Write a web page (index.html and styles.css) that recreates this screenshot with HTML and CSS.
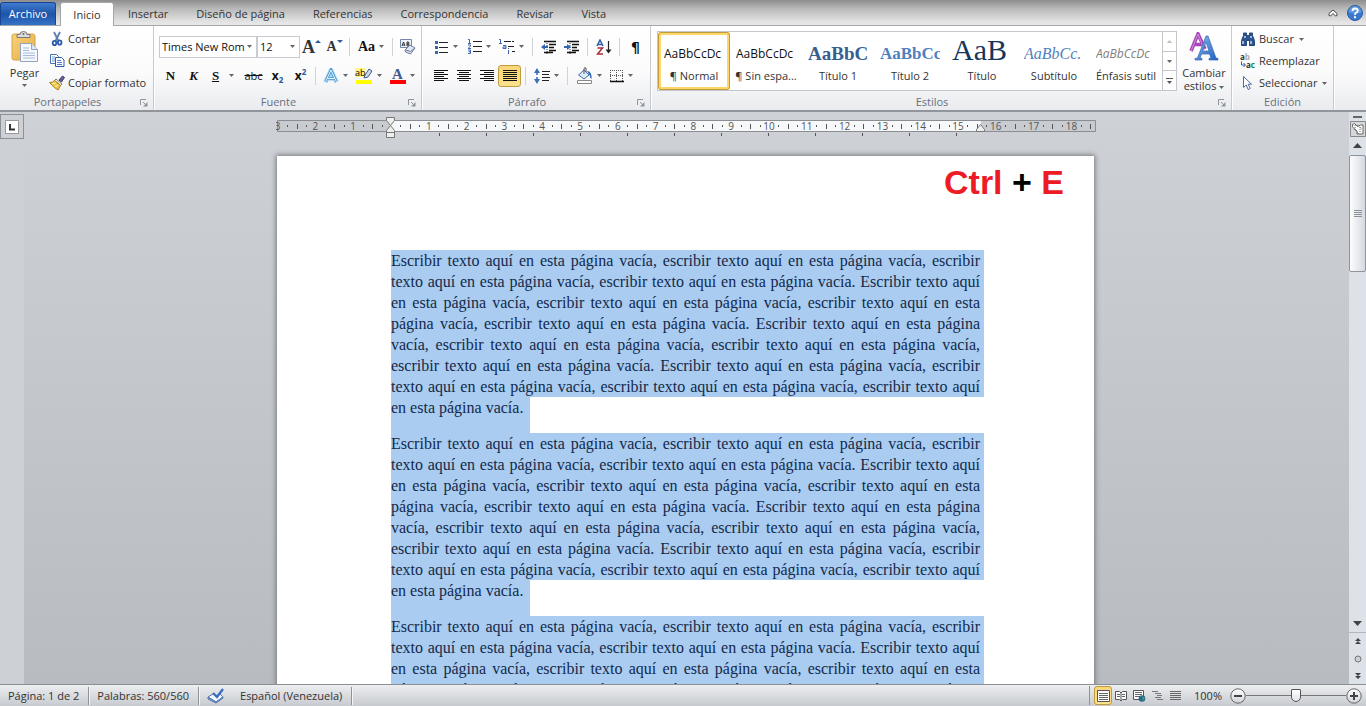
FILE: index.html
```html
<!DOCTYPE html>
<html lang="es">
<head>
<meta charset="utf-8">
<title>Documento - Procesador de textos</title>
<link rel="stylesheet" href="styles.css">
</head>
<body>
<svg class="defs" aria-hidden="true">
  <defs>
    <symbol id="arrow" viewBox="0 0 5 3"><path d="M0 0h5L2.500 3z" fill="#666"/></symbol>
    <symbol id="launch" viewBox="0 0 8 8"><path d="M.5 6V.5H6" fill="none" stroke="#8f959e"/><path d="M3 3l3 3" stroke="#8f959e"/><path d="M7.500 3v4.500H3z" fill="#8f959e"/></symbol>
    <linearGradient id="gold" x2="1" y2="1"><stop stop-color="#f8d27a"/><stop offset="1" stop-color="#e5ae45"/></linearGradient>
    <linearGradient id="blueA" x2="1" y2="1"><stop stop-color="#8dbcf0"/><stop offset="1" stop-color="#1f5fc0"/></linearGradient>
    <linearGradient id="steel" x2="0" y2="1"><stop stop-color="#fff"/><stop offset="1" stop-color="#cdd1d7"/></linearGradient>
  </defs>
</svg>

<nav class="tabs">
  <button class="tab file">Archivo</button>
  <button class="tab active">Inicio</button>
  <button class="tab">Insertar</button>
  <button class="tab">Diseño de página</button>
  <button class="tab">Referencias</button>
  <button class="tab">Correspondencia</button>
  <button class="tab">Revisar</button>
  <button class="tab">Vista</button>
  <span class="grow"></span>
  <button class="plain" aria-label="Minimizar la cinta"><svg width="10" height="8" viewBox="0 0 10 8"><path d="M1 4.500L5 1l4 3.500v2L7.500 7 5 4.500 2.500 7 1 6.500z" fill="#fff" stroke="#444"/></svg></button>
  <button class="plain help" aria-label="Ayuda"><svg width="16" height="16" viewBox="0 0 16 16"><circle cx="8" cy="8" r="7.500" fill="#3b78cf" stroke="#285ba5"/><path d="M1.500 7a6.500 6 0 0 1 13 0q-6 3-13 0z" fill="#5f97e0"/><path d="M5.500 6q0-2.500 2.600-2.500t2.600 2.200q0 1.300-1.500 2.100T8 10" fill="none" stroke="#fff" stroke-width="1.800"/><path d="M7 11.200h2v2H7z" fill="#fff"/></svg></button>
</nav>

<header class="ribbon">
  <section class="group clip">
    <div class="body">
      <button class="big paste">
        <svg width="28" height="32" viewBox="0 0 28 32"><rect x="1" y="3" width="23" height="26" rx="2" fill="url(#gold)" stroke="#d9a548"/><path d="M6 6.500V3.500h3q0-3 3.500-3t3.500 3h3v3z" fill="#ddd" stroke="#777"/><circle cx="12.500" cy="3" r="1" fill="#666"/><path d="M9.500 12.500h11l6 6v12h-17z" fill="#f5f9ff" stroke="#93a5bd"/><path d="M20.500 12.500v6h6" fill="#dce7f5" stroke="#93a5bd"/><path d="M12 17h6M12 19.500h6M12 22h12M12 24.500h12M12 27h12" stroke="#a7bbdc"/></svg>
        <span>Pegar</span><svg class="arr"><use href="#arrow"/></svg>
      </button>
      <div class="stack">
        <button class="cmd"><svg width="16" height="16" viewBox="0 0 16 16"><path d="M5 1l4.500 9M11 1L6.500 10" stroke="#5c7fae" stroke-width="1.800"/><ellipse cx="5.500" cy="12" rx="1.800" ry="2.200" fill="none" stroke="#2a5cab" stroke-width="1.800"/><ellipse cx="10.700" cy="11.500" rx="1.800" ry="2.200" fill="none" stroke="#2a5cab" stroke-width="1.800"/></svg>Cortar</button>
        <button class="cmd"><svg width="16" height="16" viewBox="0 0 16 16"><path d="M1.500 1.500h6l2 2v7h-8z" fill="#fff" stroke="#4870b0"/><path d="M3 4h3M3 6h5M3 8h5" stroke="#6e98d5"/><path d="M6.500 4.500h6l2.500 2.500v6.500H6.500z" fill="#fff" stroke="#2f5b9f"/><path d="M8 7.500h4M8 9.500h5M8 11.500h5" stroke="#4c83cf"/></svg>Copiar</button>
        <button class="cmd"><svg width="16" height="16" viewBox="0 0 16 16"><path d="M10 5l3.500-4 2 1.500L12.500 7z" fill="#625d98" stroke="#44406f"/><path d="M7 4l6 5-1.500 1.500-6-5z" fill="#eee" stroke="#887a52"/><path d="M5.500 5.500l6 5L9 15Q5 13 .5 7.500q3 .5 5-2z" fill="#efca4d" stroke="#aa7d1a"/><path d="M3 8.500q3 .5 4-1M6 11.500q2 0 3-2" stroke="#fff0a5" fill="none"/></svg>Copiar formato</button>
      </div>
    </div>
    <h2>Portapapeles<svg class="launch"><use href="#launch"/></svg></h2>
  </section>

  <section class="group font">
    <div class="body rows">
      <div class="row combos">
        <label class="combo family"><select aria-label="Fuente"><option>Times New Rom</option></select><svg class="arr"><use href="#arrow"/></svg></label>
        <label class="combo size"><select aria-label="Tamaño"><option>12</option></select><svg class="arr"><use href="#arrow"/></svg></label>
        <button class="tool serif grown">A<svg class="mark" width="6" height="3" viewBox="0 0 6 3"><path d="M0 3h6L3 0z" fill="#31599c"/></svg></button>
        <button class="tool serif shrunk">A<svg class="mark" width="6" height="3" viewBox="0 0 6 3"><path d="M0 0h6L3 3z" fill="#31599c"/></svg></button>
        <i class="sep"></i>
        <button class="tool split case serif">Aa<svg class="arr"><use href="#arrow"/></svg></button>
        <i class="sep"></i>
        <button class="tool" aria-label="Borrar formato"><svg width="17" height="17" viewBox="0 0 17 17"><path d="M1.500 1.500h11v8h-11z" fill="#eef4fd" stroke="#7387a8"/><path d="M3 8l1.500-4L6 8M3.500 7h2M8 4v4h1.500q1.500-1 0-2H8h1.500q1-1 0-2z" fill="none" stroke="#333"/><path d="M6 12l5-5 5 3-4.500 6-5-2z" fill="#dfe6f4" stroke="#6c7c9e"/><path d="M6.500 12l5 1.500L16 10" fill="none" stroke="#6c7c9e"/></svg></button>
      </div>
      <div class="row">
        <button class="tool serif bold">N</button>
        <button class="tool serif bold ital">K</button>
        <button class="tool split under serif bold"><u>S</u><svg class="arr"><use href="#arrow"/></svg></button>
        <button class="tool strike"><s>abc</s></button>
        <button class="tool heavy">x<sub>2</sub></button>
        <button class="tool heavy">x<sup>2</sup></button>
        <i class="sep"></i>
        <button class="tool split" aria-label="Efectos de texto"><svg width="16" height="16" viewBox="0 0 16 16"><path d="M2.500 14L8 2l5.500 12M4.500 10.500h7" fill="none" stroke="#a9d6f4" stroke-width="4.500" stroke-linejoin="round"/><path d="M2.500 14L8 2l5.500 12M4.500 10.500h7" fill="none" stroke="#4b96cb" stroke-width="2.600"/><path d="M2.500 14L8 2l5.500 12M4.500 10.500h7" fill="none" stroke="#e8f5ff"/></svg><svg class="arr"><use href="#arrow"/></svg></button>
        <button class="tool split hl" aria-label="Color de resaltado"><svg width="18" height="18" viewBox="0 0 18 18"><path d="M0 1h10v9H0z" fill="#fff685"/><text x="0" y="9" class="ab">ab</text><path d="M10 8l4-6 3 2-4 6-4 1z" fill="#cbd9ec" stroke="#435c85"/><path d="M1 13h16v4H1z" fill="#ff0"/></svg><svg class="arr"><use href="#arrow"/></svg></button>
        <button class="tool split" aria-label="Color de fuente"><svg width="17" height="18" viewBox="0 0 17 18"><text x="3" y="12" class="colorA">A</text><path d="M1 13h16v4H1z" fill="#f00"/></svg><svg class="arr"><use href="#arrow"/></svg></button>
      </div>
    </div>
    <h2>Fuente<svg class="launch"><use href="#launch"/></svg></h2>
  </section>

  <section class="group para">
    <div class="body rows">
      <div class="row">
        <button class="tool split" aria-label="Viñetas"><svg width="15" height="14" viewBox="0 0 15 14"><path d="M5 2.500h9M5 7.500h9M5 12.500h9" stroke="#222"/><path d="M1 1h3v3H1zM1 6h3v3H1zM1 11h3v3H1z" fill="#3c67ad"/></svg><svg class="arr"><use href="#arrow"/></svg></button>
        <button class="tool split" aria-label="Numeración"><svg width="15" height="15" viewBox="0 0 15 15"><path d="M6 2.500h9M6 7.500h9M6 12.500h9" stroke="#222"/><path d="M1 .5h1.500v4M1 4.500h3M1 6h2.500v1.200L1 9.500h3M1 11h2.500v3.500H1M1.500 12.700h2" fill="none" stroke="#3c67ad"/></svg><svg class="arr"><use href="#arrow"/></svg></button>
        <button class="tool split" aria-label="Lista multinivel"><svg width="16" height="15" viewBox="0 0 16 15"><path d="M5 2.500h10M9 7.500h6M13 12.500h3" stroke="#222" stroke-dasharray="7 1"/><path d="M0 .5h1.500v4M0 4.500h3M4 6.500h3v3H4V8h3M9.500 9v1M9.500 11v4" fill="none" stroke="#3c67ad"/></svg><svg class="arr"><use href="#arrow"/></svg></button>
        <i class="sep"></i>
        <button class="tool" aria-label="Disminuir sangría"><svg width="16" height="14" viewBox="0 0 16 14"><path d="M3 1.500h12M8 4.500h7M8 7.500h5M8 10.500h7M3 12.500h9" stroke="#111" stroke-width="1.600"/><path d="M6 1v13" stroke="#333" stroke-dasharray="1 1"/><path d="M7 7H3" stroke="#2f65b7" stroke-width="2"/><path d="M4 4v6L0 7z" fill="#2f65b7"/></svg></button>
        <button class="tool" aria-label="Aumentar sangría"><svg width="16" height="14" viewBox="0 0 16 14"><path d="M3 1.500h12M8 4.500h7M8 7.500h5M8 10.500h7M3 12.500h9" stroke="#111" stroke-width="1.600"/><path d="M6 1v13" stroke="#333" stroke-dasharray="1 1"/><path d="M0 7h4" stroke="#2f65b7" stroke-width="2"/><path d="M3 4v6l4-3z" fill="#2f65b7"/></svg></button>
        <i class="sep"></i>
        <button class="tool" aria-label="Ordenar"><svg width="16" height="16" viewBox="0 0 16 16"><path d="M1 7l3-6 3 6M2 5.500h4" fill="none" stroke="#315ca9" stroke-width="1.500"/><path d="M1.500 9H6.500l-5 6H7" fill="none" stroke="#a42d36" stroke-width="1.500"/><path d="M12.500 2v10" stroke="#222" stroke-width="1.200"/><path d="M9.500 10.500h6l-3 4z" fill="#222"/></svg></button>
        <i class="sep"></i>
        <button class="tool pilcrow" aria-label="Mostrar todo">¶</button>
      </div>
      <div class="row">
        <button class="tool" aria-label="Alinear a la izquierda"><svg width="14" height="12" viewBox="0 0 14 12"><path d="M0 .5h14M0 2.500h10M0 4.500h14M0 6.500h10M0 8.500h14M0 10.500h10" stroke="#111"/></svg></button>
        <button class="tool" aria-label="Centrar"><svg width="14" height="12" viewBox="0 0 14 12"><path d="M0 .5h14M2 2.500h10M0 4.500h14M2 6.500h10M0 8.500h14M2 10.500h10" stroke="#111"/></svg></button>
        <button class="tool" aria-label="Alinear a la derecha"><svg width="14" height="12" viewBox="0 0 14 12"><path d="M0 .5h14M4 2.500h10M0 4.500h14M4 6.500h10M0 8.500h14M4 10.500h10" stroke="#111"/></svg></button>
        <button class="tool on" aria-label="Justificar"><svg width="14" height="12" viewBox="0 0 14 12"><path d="M0 .5h14M0 2.500h14M0 4.500h14M0 6.500h14M0 8.500h14M0 10.500h14" stroke="#111"/></svg></button>
        <i class="sep"></i>
        <button class="tool split" aria-label="Interlineado"><svg width="16" height="16" viewBox="0 0 16 16"><path d="M3 3v10" stroke="#2f65b7" stroke-width="1.500" stroke-dasharray="4 2"/><path d="M0 5l3-5 3 5zM0 11l3 5 3-5z" fill="#3c70bd"/><path d="M8 3.500h8M8 6.500h7M8 9.500h8M8 12.500h7" stroke="#222"/></svg><svg class="arr"><use href="#arrow"/></svg></button>
        <i class="sep"></i>
        <button class="tool split" aria-label="Sombreado"><svg width="17" height="17" viewBox="0 0 17 17"><path d="M2.500 8L8 3l5 5-5 4z" fill="#dcebfb" stroke="#456a9e"/><path d="M8 7V2q0-2 2-1v4" fill="none" stroke="#555"/><path d="M11 4q5 0 4.500 8-2-1-1.500-3z" fill="#2d65b3"/><path d="M1.500 13.500h14v3h-14z" fill="#fff" stroke="#888"/></svg><svg class="arr"><use href="#arrow"/></svg></button>
        <button class="tool split" aria-label="Bordes"><svg width="14" height="14" viewBox="0 0 14 14"><path d="M.5 1v11M6.500 1v11M12.500 1v11M0 1.500h13M0 6.500h13" stroke="#555" stroke-dasharray="1 1"/><path d="M0 12.500h14" stroke="#111" stroke-width="1.500"/></svg><svg class="arr"><use href="#arrow"/></svg></button>
      </div>
    </div>
    <h2>Párrafo<svg class="launch"><use href="#launch"/></svg></h2>
  </section>

  <section class="group styles">
    <div class="body">
      <div class="gallery">
        <button class="style chosen"><b class="plainstyle">AaBbCcDc</b><span>¶ Normal</span></button>
        <button class="style"><b class="plainstyle">AaBbCcDc</b><span>¶ Sin espa...</span></button>
        <button class="style"><b class="h1style">AaBbC</b><span>Título 1</span></button>
        <button class="style"><b class="h2style">AaBbCc</b><span>Título 2</span></button>
        <button class="style"><b class="titlestyle">AaB</b><span>Título</span></button>
        <button class="style"><b class="substyle">AaBbCc.</b><span>Subtítulo</span></button>
        <button class="style"><b class="subtle">AaBbCcDc</b><span>Énfasis sutil</span></button>
        <div class="gscroll">
          <button aria-label="Arriba"><svg width="5" height="3" viewBox="0 0 5 3"><path d="M0 3h5L2.500 0z" fill="#bbb"/></svg></button>
          <button aria-label="Abajo"><svg class="arr"><use href="#arrow"/></svg></button>
          <button aria-label="Más"><svg width="7" height="6" viewBox="0 0 7 6"><path d="M0 .5h7" stroke="#555"/><path d="M1 3h5L3.500 6z" fill="#555"/></svg></button>
        </div>
      </div>
      <button class="big change">
        <svg width="30" height="30" viewBox="0 0 30 30"><path d="M2 19L9 2l7 15M5 12.500h8" fill="none" stroke="#a548b5" stroke-width="3.600"/><path d="M2 19L9 2l6 15" fill="none" stroke="#d58be0"/><path d="M6 28h7v-1.500l-2-.5 1.500-4h8l1.500 4-2 .5V28h9v-1.500l-2-.5L19 4h-2L8.500 26l-2.500.5zM13.500 19L17 10l3 9z" fill="url(#blueA)" stroke="#3169b5" stroke-width=".7"/></svg>
        <span>Cambiar<br>estilos <svg class="arr"><use href="#arrow"/></svg></span>
      </button>
    </div>
    <h2>Estilos<svg class="launch"><use href="#launch"/></svg></h2>
  </section>

  <section class="group edit">
    <div class="body">
      <div class="stack">
        <button class="cmd"><svg width="16" height="16" viewBox="0 0 16 16"><path d="M1.500 14.500v-5l2-5V2h3v2.500h3V2h3v2.500l2 5v5h-5v-5h-3v5z" fill="#2d548e" stroke="#254777"/><path d="M3 10v3M11 10v3M5 5v2M11 5v2" stroke="#b7d0ef" stroke-width="1.600"/></svg>Buscar<svg class="arr"><use href="#arrow"/></svg></button>
        <button class="cmd"><svg class="replace" width="16" height="16" viewBox="0 0 16 16"><text x="0" y="7" class="rep">a<tspan fill="#aaa">b</tspan></text><text x="6" y="15" class="rep">a<tspan fill="#168a2e">c</tspan></text><path d="M1.500 8.500V12H5M3.500 10l2 2-2 2" fill="none" stroke="#335f9d"/></svg>Reemplazar</button>
        <button class="cmd"><svg width="16" height="16" viewBox="0 0 16 16"><path d="M3.500 1.500v11l2.700-2.500 2 4.500 2-1-2-4.300h3.300z" fill="#fff" stroke="#526c99"/></svg>Seleccionar<svg class="arr"><use href="#arrow"/></svg></button>
      </div>
    </div>
    <h2>Edición</h2>
  </section>
</header>

<main class="workspace">
  <aside class="vruler"><button aria-label="Tabulación"><svg width="14" height="14" viewBox="0 0 14 14"><path d="M.5.5h13v13H.5z" fill="#fff" stroke="#999"/><path d="M5 4v5.500h5" fill="none" stroke="#333" stroke-width="2"/></svg></button></aside>
  <div class="canvas">
    <svg class="ruler" id="ruler" viewBox="0 0 820 24" width="820" height="24"></svg>
    <article class="page">
      <div class="shortcut">Ctrl <span>+</span> E</div>
      <div class="text" id="text">
        <p><span>Escribir texto aquí en esta página vacía, escribir texto aquí en esta página vacía, escribir</span> <span>texto aquí en esta página vacía, escribir texto aquí en esta página vacía. Escribir texto aquí</span> <span>en esta página vacía, escribir texto aquí en esta página vacía, escribir texto aquí en esta</span> <span>página vacía, escribir texto aquí en esta página vacía. Escribir texto aquí en esta página</span> <span>vacía, escribir texto aquí en esta página vacía, escribir texto aquí en esta página vacía,</span> <span>escribir texto aquí en esta página vacía. Escribir texto aquí en esta página vacía, escribir</span> <span>texto aquí en esta página vacía, escribir texto aquí en esta página vacía, escribir texto aquí</span> <span class="last">en esta página vacía.</span></p>
        <p><span>Escribir texto aquí en esta página vacía, escribir texto aquí en esta página vacía, escribir</span> <span>texto aquí en esta página vacía, escribir texto aquí en esta página vacía. Escribir texto aquí</span> <span>en esta página vacía, escribir texto aquí en esta página vacía, escribir texto aquí en esta</span> <span>página vacía, escribir texto aquí en esta página vacía. Escribir texto aquí en esta página</span> <span>vacía, escribir texto aquí en esta página vacía, escribir texto aquí en esta página vacía,</span> <span>escribir texto aquí en esta página vacía. Escribir texto aquí en esta página vacía, escribir</span> <span>texto aquí en esta página vacía, escribir texto aquí en esta página vacía, escribir texto aquí</span> <span class="last">en esta página vacía.</span></p>
        <p><span>Escribir texto aquí en esta página vacía, escribir texto aquí en esta página vacía, escribir</span> <span>texto aquí en esta página vacía, escribir texto aquí en esta página vacía. Escribir texto aquí</span> <span>en esta página vacía, escribir texto aquí en esta página vacía, escribir texto aquí en esta</span> <span>página vacía, escribir texto aquí en esta página vacía. Escribir texto aquí en esta página</span></p>
      </div>
    </article>
  </div>
  <aside class="vscroll">
    <i class="splitter"></i>
    <button class="toggle" aria-label="Regla"><svg width="16" height="16" viewBox="0 0 16 16"><path d="M.5.5h15v15H.5z" fill="#d5d8dc" stroke="#888"/><path d="M2.500 3.500l2-1 3 3 3-1.500h2.500v9h-6v-3l-4.500-4z" fill="#fff" stroke="#666"/><path d="M4 8l5 5M7 4l5 4M5 4v4M10 6v5" stroke="#666" stroke-dasharray="1 1"/></svg></button>
    <button aria-label="Subir"><svg width="9" height="5" viewBox="0 0 9 5"><path d="M0 5h9L4.500 0z" fill="#444"/></svg></button>
    <div class="track"><div class="thumb"><svg width="8" height="8" viewBox="0 0 8 8"><path d="M0 .5h8M0 2.500h8M0 4.500h8M0 6.500h8" stroke="#8a9099"/></svg></div></div>
    <button aria-label="Bajar"><svg width="9" height="5" viewBox="0 0 9 5"><path d="M0 0h9L4.500 5z" fill="#444"/></svg></button>
    <div class="browse">
      <button aria-label="Página anterior"><svg width="6" height="7" viewBox="0 0 6 7"><path d="M0 3h6L3 0zM0 6h6L3 3z" fill="#444"/></svg></button>
      <button aria-label="Seleccionar objeto"><svg width="8" height="8" viewBox="0 0 8 8"><circle cx="4" cy="4" r="3" fill="#ccd0d6" stroke="#777"/></svg></button>
      <button aria-label="Página siguiente"><svg width="6" height="7" viewBox="0 0 6 7"><path d="M0 1h6L3 4zM0 4h6L3 7z" fill="#444"/></svg></button>
    </div>
  </aside>
</main>

<footer class="status">
  <button class="cell">Página: 1 de 2</button>
  <button class="cell">Palabras: 560/560</button>
  <button class="cell lang"><svg width="18" height="16" viewBox="0 0 18 16"><path d="M1 9l5-3 3 2 4-2 3 3-7 5z" fill="#f4f8ff" stroke="#5777ad"/><path d="M1 9v2l8 4 7-5V9l-7 5z" fill="#7c9dd2" stroke="#5777ad"/><path d="M6 5l4 4L16 1" fill="none" stroke="#386cc4" stroke-width="2.200"/></svg>Español (Venezuela)</button>
  <span class="grow"></span>
  <div class="views">
    <button class="on" aria-label="Diseño de impresión"><svg width="13" height="12" viewBox="0 0 13 12"><path d="M.5.5h12v11H.5z" fill="#fff" stroke="#555"/><path d="M2 3.500h9M2 5.500h9M2 7.500h9M2 9.500h9" stroke="#666"/></svg></button>
    <button aria-label="Lectura"><svg width="12" height="12" viewBox="0 0 12 12"><path d="M.5 1.500h4L6 3l1.500-1.500h4v8h-4L6 11 4.500 9.500h-4zM6 3v8" fill="#fff" stroke="#555"/><path d="M2 4.500h3M2 6.500h3M7 4.500h3M7 6.500h3" stroke="#666"/></svg></button>
    <button aria-label="Diseño web"><svg width="13" height="12" viewBox="0 0 13 12"><path d="M.5.5h10v9H.5z" fill="#fff" stroke="#555"/><path d="M2 2.500h7M2 4.500h7M2 6.500h5" stroke="#666"/><circle cx="9" cy="8.500" r="3.300" fill="#29698f"/><path d="M8 6l2 2-1 3 3-3z" fill="#55a868"/></svg></button>
    <button aria-label="Esquema"><svg width="11" height="10" viewBox="0 0 11 10"><path d="M0 .5h6M3 2.500h6M5 4.500h5M3 6.500h6M5 8.500h6" stroke="#777"/></svg></button>
    <button aria-label="Borrador"><svg width="11" height="10" viewBox="0 0 11 10"><path d="M0 .5h11M0 2.500h11M0 4.500h11M0 6.500h11M0 8.500h11" stroke="#666"/></svg></button>
  </div>
  <button class="percent">100%</button>
  <button class="round" aria-label="Alejar"><svg width="16" height="16" viewBox="0 0 16 16"><circle cx="8" cy="8" r="7.200" fill="url(#steel)" stroke="#666"/><path d="M4 8h8" stroke="#444" stroke-width="2"/></svg></button>
  <input class="zoom" type="range" min="0" max="100" value="50" aria-label="Zoom">
  <button class="round" aria-label="Acercar"><svg width="16" height="16" viewBox="0 0 16 16"><circle cx="8" cy="8" r="7.200" fill="url(#steel)" stroke="#666"/><path d="M4 8h8M8 4v8" stroke="#444" stroke-width="2"/></svg></button>
</footer>
<script src="ruler.js"></script>
</body>
</html>
```
FILE: styles.css
```css
* { box-sizing: border-box; }
body {
  margin: 0;
  height: 100vh;
  display: flex;
  flex-direction: column;
  overflow: hidden;
  font: 11px/16px "Open Sans", "Noto Sans", sans-serif;
  color: #333;
}
button, select { font: inherit; color: inherit; border: 0; padding: 0; margin: 0; background: none; }
button { display: flex; align-items: center; justify-content: center; white-space: nowrap; }
svg { display: block; flex: none; }
.defs { position: absolute; width: 0; height: 0; }
.grow { flex: 1; }
.arr { width: 5px; height: 3px; }

/* Tab strip */
.tabs {
  flex: none;
  display: flex;
  align-items: flex-end;
  height: 26px;
  padding-right: 3px;
  background: linear-gradient(#8d8d8d, #b9b9b9 35%, #e2e2e2 85%, #e8e8e8);
  border-bottom: 1px solid #a3a7ac;
}
.tab { height: 23px; padding: 0 14px; }
.tab.file {
  width: 56px;
  margin-right: 4px;
  padding: 0;
  color: #fff;
  background: linear-gradient(#3f7bd0, #1d54a8 50%, #3572c6);
  border: 1px solid #17458f;
  border-bottom: 0;
  border-radius: 3px 3px 0 0;
}
.tab.active { height: 24px; margin-bottom: -1px; width: 54px; padding: 0; background: #fff; border: 1px solid #a3a7ac; border-bottom: 0; border-radius: 3px 3px 0 0; }
.plain { height: 24px; margin-left: 9px; }

/* Ribbon */
.ribbon {
  flex: none;
  display: flex;
  height: 86px;
  background: linear-gradient(#fff, #fbfbfc 55%, #e9ebee);
  border-bottom: 2px solid #8f959b;
}
.group { display: flex; flex-direction: column; border-right: 1px solid #c6c9ce; box-shadow: 1px 0 #fff; }
.group .body { flex: 1; display: flex; }
.group h2 { position: relative; margin: 0; padding-right: 18px; height: 16px; font-size: 11px; font-weight: 400; line-height: 16px; text-align: center; color: #6a6f7d; }
.group.edit h2 { padding-right: 0; }
.launch { position: absolute; right: 5px; top: 5px; width: 8px; height: 8px; }
.clip { width: 154px; }
.font { width: 268px; }
.para { width: 229px; }
.styles { width: 581px; }
.edit { width: 102px; }
.big { flex-direction: column; justify-content: flex-start; }
.paste { width: 49px; padding-top: 5px; }
.paste span { padding: 2px 0 3px; }
.stack { display: flex; flex-direction: column; padding-top: 2px; }
.cmd { height: 22px; gap: 3px; justify-content: flex-start; }
.cmd .arr { margin-left: 2px; }
.rows { flex-direction: column; padding: 6px 0 0 5px; }
.row { display: flex; align-items: center; height: 29px; }
.row > * { flex: none; }
.tool { width: 23px; height: 22px; font-size: 13px; color: #111; }
.tool.split { width: 33px; gap: 4px; }
.font .tool.case { width: 36px; font-size: 14px; }
.font .tool.under { width: 36px; gap: 10px; }
.strike { width: 25px; }
.sep { width: 1px; height: 18px; margin: 0 4px; background: #cfd2d6; }
.font .sep { margin: 0 3px; }
.para .row { padding-left: 2px; }
.serif { font-family: "Liberation Serif", serif; }
.bold, .case { font-weight: 700; }
.ital { font-style: italic; }
.heavy { font: 700 12px "Noto Sans", sans-serif; }
.heavy sub, .heavy sup { font-size: 8px; line-height: 8px; color: #31599c; }
.heavy sub { align-self: flex-end; padding-bottom: 3px; }
.heavy sup { align-self: flex-start; padding-top: 3px; }
.tool s { font-size: 11px; }
.grown { font-size: 18px; font-weight: 700; color: #333; }
.shrunk { font-size: 14px; font-weight: 700; color: #333; }
.mark { align-self: flex-start; margin-top: 4px; }
.on { background: linear-gradient(#fbd67a, #fce18c); border: 1px solid #c29b3c; border-radius: 3px; }
.pilcrow { font: 700 14px "DejaVu Sans", sans-serif; }
.ab { font: 9px "Open Sans", sans-serif; }
.replace { overflow: visible; }
.rep { font: 700 8px "Open Sans", sans-serif; fill: #333; }
.colorA { font: 700 15px "Liberation Serif", serif; fill: #3b5a92; }
.combo { display: flex; align-items: center; height: 22px; padding: 0 4px 0 2px; background: #fff; border: 1px solid #c8ccd2; }
.combo select { flex: 1; min-width: 0; appearance: none; color: #111; }
.family { width: 98px; }
.size { width: 43px; }

/* Style gallery */
.gallery { display: flex; height: 60px; margin: 5px 0 0 6px; background: #fff; border: 1px solid #c3c7cc; }
.style { width: 72px; flex-direction: column; justify-content: flex-start; padding: 3px 6px 0; overflow: hidden; }
.style b { width: 60px; height: 32px; overflow: hidden; text-align: left; font-weight: 400; line-height: 38px; }
.style span { line-height: 18px; }
.chosen { border: 3px solid #fcd667; outline: 1px solid #c29b3c; outline-offset: -1px; border-radius: 3px; padding: 0 3px; }
.plainstyle { font-size: 12px; color: #111; }
.style .h1style { font: 700 19px/38px "Liberation Serif", serif; color: #365f91; }
.style .h2style { font: 700 17px/38px "Liberation Serif", serif; color: #4f81bd; }
.style .titlestyle { font: 30px/30px "Liberation Serif", serif; color: #17365d; }
.style .substyle { font: italic 16px/38px "Liberation Serif", serif; color: #4f81bd; }
.subtle { font-size: 12px; font-style: italic; color: #808080; }
.gscroll { display: flex; flex-direction: column; width: 14px; }
.gscroll button { flex: 1; border-left: 1px solid #c3c7cc; border-bottom: 1px solid #c3c7cc; }
.gscroll button:last-child { border-bottom: 0; }
.change { width: 54px; padding-top: 6px; }
.change span { line-height: 13px; padding-top: 4px; }
.change .arr { display: inline-block; vertical-align: middle; }
.edit .stack { padding-left: 8px; }

/* Document area */
.workspace { flex: 1; min-height: 0; display: flex; background: linear-gradient(#ced1d6, #b8bbbf); }
.vruler { width: 24px; background: #cdd1d6; }
.vruler button { width: 24px; height: 25px; margin-top: 2px; border: 1px solid #8d9197; }
.canvas { flex: 1; min-width: 0; display: flex; flex-direction: column; align-items: center; overflow: hidden; padding: 3px 2px 0 0; }
.ruler { flex: none; margin-bottom: 17px; font: 10px "Open Sans", sans-serif; fill: #555; }
.page { flex: none; width: 817px; min-height: 1056px; background: #fff; box-shadow: 0 0 5px 1px #74777c; }
.shortcut { height: 94px; padding: 6px 30px 0 0; text-align: right; font: 700 34px/40px "Liberation Sans", sans-serif; color: #ed1c24; }
.shortcut span { color: #000; }
.text { margin: 0 110px 0 114px; font: 16px/21px "Liberation Serif", serif; color: #13294b; }
.text p { margin: 0 0 15px; height: 168px; }
.text p span { display: block; padding-right: 4px; text-align-last: justify; background: #a9ccf0; white-space: nowrap; }
.text p .last { width: 139px; height: 36px; text-align-last: left; }

/* Scroll bar */
.vscroll { width: 17px; display: flex; flex-direction: column; background: #dde1e8; }
.vscroll button { width: 17px; height: 17px; }
.splitter { height: 2px; margin: 4px 4px 3px; background: #666; }
.vscroll .toggle { height: 16px; }
.track { flex: 1; padding-top: 1px; }
.thumb { height: 117px; display: flex; align-items: center; justify-content: center; border: 1px solid #8d949e; border-radius: 2px; background: linear-gradient(90deg, #fdfdfe, #d5d9df); }
.browse { border-top: 1px solid #b3b7bd; }

/* Status bar */
.status { flex: none; display: flex; align-items: center; height: 22px; padding-right: 4px; background: linear-gradient(#eceef0, #c7cacf); border-top: 1px solid #8b9097; }
.cell { height: 18px; padding: 0 9px 0 8px; border-right: 1px solid #8e9299; box-shadow: 1px 0 #f5f5f5; }
.lang { gap: 15px; }
.views { display: flex; border-left: 1px solid #8e9299; padding-left: 4px; }
.views button { width: 18px; height: 19px; }
.percent { margin: 0 8px 0 10px; }
.zoom { appearance: none; width: 100px; height: 18px; margin: 0; background: linear-gradient(#777, #777) center / 100% 1px no-repeat; }
.zoom::-webkit-slider-thumb { appearance: none; width: 10px; height: 13px; background: linear-gradient(#fff, #dfe2e6); border: 1px solid #555; border-radius: 1px 1px 5px 5px; }
```
FILE: ruler.js
```js
// Draws the horizontal ruler: one numbered unit per centimetre.
const cm = 37.8;
const origin = 115;
const right = 705;
const parts = [
  '<path d="M1.500 5.500h818v11h-818z" fill="#c8ccd1" stroke="#8a8e93"/>',
  `<path d="M${origin} 6h${right - origin}v10h-${right - origin}z" fill="#f7f8f9"/>`
];
for (let n = -3; n <= 18; n++) {
  const x = origin + n * cm;
  if (n !== 0) {
    parts.push(`<text x="${x}" y="15" text-anchor="middle">${Math.abs(n)}</text>`);
  }
  [0.25, 0.5, 0.75].forEach((f) => {
    const half = f === 0.5;
    const tx = Math.round(x + f * cm);
    if (tx < 818) {
      parts.push(`<path d="M${tx} ${half ? 9 : 10}h1v${half ? 5 : 2}h-1z"/>`);
    }
  });
}
for (let x = origin + 48; x < right; x += 47) {
  parts.push(`<path d="M${x} 18h1v3h-1z"/>`);
}
parts.push('<path d="M110.500 2.500h8v3l-4 5 4 5v7h-8v-7l4-5-4-5zM110.500 17.500h8" fill="#eee" stroke="#777"/>');
parts.push('<path d="M700.500 16.500v-2l4-5 4 5v2z" fill="#eee" stroke="#777"/>');
document.getElementById('ruler').innerHTML = parts.join('');
```
